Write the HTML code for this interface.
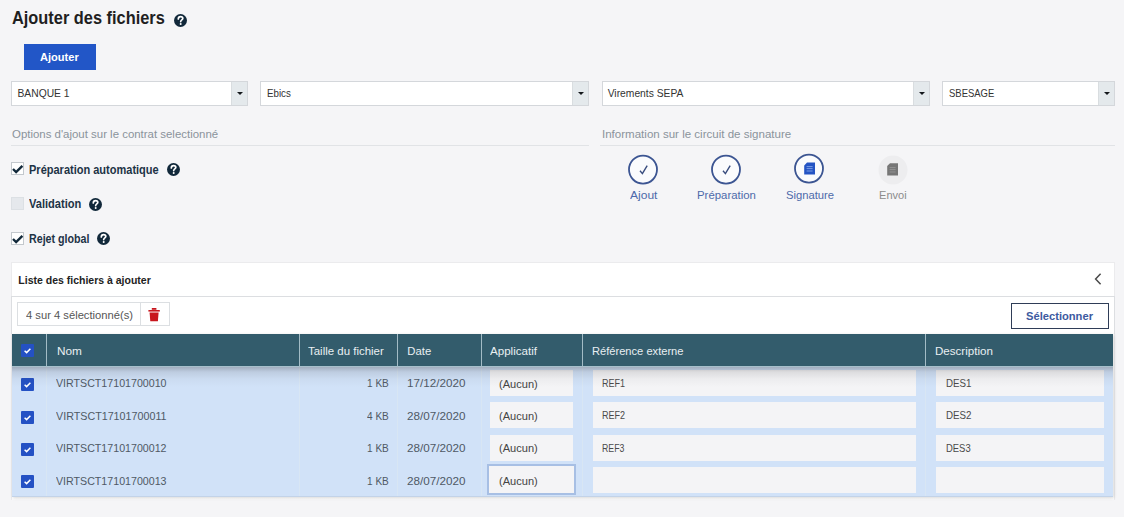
<!DOCTYPE html>
<html><head><meta charset="utf-8">
<style>
*{box-sizing:border-box;margin:0;padding:0}
html,body{width:1124px;height:517px;overflow:hidden;background:#f5f5f7;font-family:"Liberation Sans",sans-serif;position:relative}
.t{position:absolute;white-space:nowrap;line-height:1;transform-origin:0 0}
.a{position:absolute}
.dd{position:absolute;top:81px;height:25px;background:#fff;border:1px solid #d4d7db}
.dd .ar{position:absolute;right:0;top:0;width:16.5px;height:23px;background:#e4e9ec;border-left:1px solid #d9dde0}
.dd .ar:after{content:"";position:absolute;left:5.2px;top:10.4px;border-left:3px solid transparent;border-right:3px solid transparent;border-top:3.6px solid #14181c}
.line{position:absolute;height:1px;background:#e1e3e6}
.cb{position:absolute;width:12.5px;height:12.5px;border:1px solid #c3c8cd;background:#fff}
.cb.off{background:#e5e8ec;border-color:#dce0e4}
.ck{position:absolute;background:#2451c4;border-radius:1px}

</style></head><body>
<!-- title help -->
<svg class="a" style="left:174px;top:14.2px" width="13" height="13" viewBox="0 0 13 13"><circle cx="6.5" cy="6.5" r="6.5" fill="#11283a"/><path d="M4.3 5.0 C4.3 3.4 5.3 2.6 6.6 2.6 C7.9 2.6 8.8 3.4 8.8 4.5 C8.8 5.9 6.7 6.0 6.7 7.6" fill="none" stroke="#fff" stroke-width="1.7" stroke-linecap="round"/><circle cx="6.7" cy="9.9" r="1" fill="#fff"/></svg>
<div class="a" style="left:23.8px;top:44px;width:72.2px;height:25.8px;background:#2256c7"></div>

<div class="dd" style="left:11px;width:237px"><div class="ar"></div></div>
<div class="dd" style="left:260px;width:329px"><div class="ar"></div></div>
<div class="dd" style="left:601.5px;width:328.5px"><div class="ar"></div></div>
<div class="dd" style="left:942px;width:173px"><div class="ar"></div></div>

<div class="line" style="left:11px;top:145px;width:578px"></div>
<div class="line" style="left:600px;top:145px;width:515px"></div>

<div class="cb" style="left:11.2px;top:162.4px"></div>
<svg class="a" style="left:11px;top:162px" width="14" height="14" viewBox="0 0 14 14"><path d="M2 7.0 L5.1 10.0 L11.4 3.8" fill="none" stroke="#11283a" stroke-width="2.4"/></svg>
<div class="cb off" style="left:11.2px;top:197.3px"></div>
<div class="cb" style="left:11.2px;top:232px"></div>
<svg class="a" style="left:11px;top:231.6px" width="14" height="14" viewBox="0 0 14 14"><path d="M2 7.0 L5.1 10.0 L11.4 3.8" fill="none" stroke="#11283a" stroke-width="2.4"/></svg>

<svg class="a" style="left:166.6px;top:162.6px" width="13" height="13" viewBox="0 0 13 13"><circle cx="6.5" cy="6.5" r="6.5" fill="#11283a"/><path d="M4.3 5.0 C4.3 3.4 5.3 2.6 6.6 2.6 C7.9 2.6 8.8 3.4 8.8 4.5 C8.8 5.9 6.7 6.0 6.7 7.6" fill="none" stroke="#fff" stroke-width="1.7" stroke-linecap="round"/><circle cx="6.7" cy="9.9" r="1" fill="#fff"/></svg>
<svg class="a" style="left:88.8px;top:197.7px" width="13" height="13" viewBox="0 0 13 13"><circle cx="6.5" cy="6.5" r="6.5" fill="#11283a"/><path d="M4.3 5.0 C4.3 3.4 5.3 2.6 6.6 2.6 C7.9 2.6 8.8 3.4 8.8 4.5 C8.8 5.9 6.7 6.0 6.7 7.6" fill="none" stroke="#fff" stroke-width="1.7" stroke-linecap="round"/><circle cx="6.7" cy="9.9" r="1" fill="#fff"/></svg>
<svg class="a" style="left:96.7px;top:232.2px" width="13" height="13" viewBox="0 0 13 13"><circle cx="6.5" cy="6.5" r="6.5" fill="#11283a"/><path d="M4.3 5.0 C4.3 3.4 5.3 2.6 6.6 2.6 C7.9 2.6 8.8 3.4 8.8 4.5 C8.8 5.9 6.7 6.0 6.7 7.6" fill="none" stroke="#fff" stroke-width="1.7" stroke-linecap="round"/><circle cx="6.7" cy="9.9" r="1" fill="#fff"/></svg>

<!-- circuit -->
<svg class="a" style="left:626px;top:153px" width="34" height="34" viewBox="0 0 34 34"><circle cx="17" cy="16.6" r="14" fill="#fafbfd" stroke="#3c5592" stroke-width="1.8"/><path d="M14 17.8 L16.4 20.6 L21.2 12.6" fill="none" stroke="#384c7e" stroke-width="1.4"/></svg>
<svg class="a" style="left:709px;top:153px" width="34" height="34" viewBox="0 0 34 34"><circle cx="17" cy="16.6" r="14" fill="#fafbfd" stroke="#3c5592" stroke-width="1.8"/><path d="M14 17.8 L16.4 20.6 L21.2 12.6" fill="none" stroke="#384c7e" stroke-width="1.4"/></svg>
<svg class="a" style="left:792px;top:152.2px" width="34" height="34" viewBox="0 0 34 34"><circle cx="17" cy="16.6" r="14" fill="#fafbfd" stroke="#3c5592" stroke-width="1.8"/><path d="M15 10.6 H23 V22.4 H12.2 V13.4 Z" fill="#2454c4"/><path d="M14.6 14.6 H20.6 M14.6 16.6 H20.6 M14.6 19 H20.6" stroke="#8fb0ee" stroke-width="0.8"/></svg>
<svg class="a" style="left:876px;top:152.5px" width="34" height="34" viewBox="0 0 34 34"><circle cx="17" cy="17" r="14.5" fill="#ededef"/><path d="M14 10.3 H22 V22.5 H11.2 V13.1 Z" fill="#767676"/><path d="M13.6 14.6 H19.6 M13.6 16.6 H19.6 M13.6 19 H19.6" stroke="#9a9a9a" stroke-width="0.8"/></svg>

<!-- panel -->
<div class="a" style="left:10.5px;top:262px;width:1104.5px;height:238px;background:linear-gradient(#fff 0,#fff 235px,#f5f5f7 238px);border:1px solid #ebebed;border-bottom:none"></div>
<div class="a" style="left:11px;top:296px;width:1104px;height:38px;border:1px solid #dcdee1;border-bottom:none"></div>
<svg class="a" style="left:1093px;top:272px" width="10" height="14" viewBox="0 0 10 14"><path d="M7.6 1.8 L2.6 7 L7.6 12.2" fill="none" stroke="#4a4a4a" stroke-width="1.5"/></svg>
<div class="a" style="left:16.5px;top:301.7px;width:153px;height:24.6px;border:1px solid #dcdfe2;background:#fff"></div>
<div class="a" style="left:140px;top:302px;width:1px;height:24px;background:#dcdfe2"></div>
<svg class="a" style="left:147px;top:307px" width="14" height="16" viewBox="0 0 14 16"><path d="M4.8 1 H9.4 V2.8 H4.8 Z" fill="#c8161d"/><path d="M1.4 3 H12.8 V4.6 H1.4 Z" fill="#c8161d"/><path d="M2.6 5.4 H11.6 L10.9 14.2 H3.3 Z" fill="#c8161d"/></svg>
<div class="a" style="left:1011px;top:303px;width:98px;height:25.5px;border:1px solid #2f3d57;background:#fff"></div>
<div class="a" style="left:12px;top:334px;width:1101px;height:162.6px;box-shadow:1px 1px 3px rgba(0,0,0,0.16)"></div>
<div class="a" style="left:12px;top:334px;width:1101px;height:32px;background:#335c6c"></div>
<div class="a" style="left:12px;top:366px;width:1101px;height:130.6px;background:#d1e2f8;border-bottom:1px solid #c3d3e8"></div>

<div class="a" style="left:46px;top:334px;width:1px;height:32px;background:#a3bcc6"></div>
<div class="a" style="left:46px;top:366px;width:1px;height:130.4px;background:#d8e6f4"></div>
<div class="a" style="left:298.5px;top:334px;width:1px;height:32px;background:#a3bcc6"></div>
<div class="a" style="left:298.5px;top:366px;width:1px;height:130.4px;background:#d8e6f4"></div>
<div class="a" style="left:397.3px;top:334px;width:1px;height:32px;background:#a3bcc6"></div>
<div class="a" style="left:397.3px;top:366px;width:1px;height:130.4px;background:#d8e6f4"></div>
<div class="a" style="left:480.7px;top:334px;width:1px;height:32px;background:#a3bcc6"></div>
<div class="a" style="left:480.7px;top:366px;width:1px;height:130.4px;background:#d8e6f4"></div>
<div class="a" style="left:582.3px;top:334px;width:1px;height:32px;background:#a3bcc6"></div>
<div class="a" style="left:582.3px;top:366px;width:1px;height:130.4px;background:#d8e6f4"></div>
<div class="a" style="left:925.4px;top:334px;width:1px;height:32px;background:#a3bcc6"></div>
<div class="a" style="left:925.4px;top:366px;width:1px;height:130.4px;background:#d8e6f4"></div>
<svg class="a" style="left:20.8px;top:344px" width="13" height="13" viewBox="0 0 13 13"><rect width="13" height="13" rx="1" fill="#2451c4"/><path d="M3.6 6.7 L5.6 8.6 L9.4 4.7" fill="none" stroke="#fff" stroke-width="1.5"/></svg>
<svg class="a" style="left:20.8px;top:378.1px" width="13" height="13" viewBox="0 0 13 13"><rect width="13" height="13" rx="1" fill="#2451c4"/><path d="M3.6 6.7 L5.6 8.6 L9.4 4.7" fill="none" stroke="#fff" stroke-width="1.5"/></svg>
<div class="a" style="left:489.8px;top:369.70px;width:83px;height:26.3px;background:#f4f4f6"></div>
<div class="a" style="left:592.6px;top:369.70px;width:323.4px;height:26.3px;background:#f4f4f6"></div>
<div class="a" style="left:936.2px;top:369.70px;width:167.8px;height:26.3px;background:#f4f4f6"></div>
<svg class="a" style="left:20.8px;top:410.5px" width="13" height="13" viewBox="0 0 13 13"><rect width="13" height="13" rx="1" fill="#2451c4"/><path d="M3.6 6.7 L5.6 8.6 L9.4 4.7" fill="none" stroke="#fff" stroke-width="1.5"/></svg>
<div class="a" style="left:489.8px;top:402.10px;width:83px;height:26.3px;background:#f4f4f6"></div>
<div class="a" style="left:592.6px;top:402.10px;width:323.4px;height:26.3px;background:#f4f4f6"></div>
<div class="a" style="left:936.2px;top:402.10px;width:167.8px;height:26.3px;background:#f4f4f6"></div>
<svg class="a" style="left:20.8px;top:442.9px" width="13" height="13" viewBox="0 0 13 13"><rect width="13" height="13" rx="1" fill="#2451c4"/><path d="M3.6 6.7 L5.6 8.6 L9.4 4.7" fill="none" stroke="#fff" stroke-width="1.5"/></svg>
<div class="a" style="left:489.8px;top:434.50px;width:83px;height:26.3px;background:#f4f4f6"></div>
<div class="a" style="left:592.6px;top:434.50px;width:323.4px;height:26.3px;background:#f4f4f6"></div>
<div class="a" style="left:936.2px;top:434.50px;width:167.8px;height:26.3px;background:#f4f4f6"></div>
<svg class="a" style="left:20.8px;top:475.3px" width="13" height="13" viewBox="0 0 13 13"><rect width="13" height="13" rx="1" fill="#2451c4"/><path d="M3.6 6.7 L5.6 8.6 L9.4 4.7" fill="none" stroke="#fff" stroke-width="1.5"/></svg>
<div class="a" style="left:487.2px;top:464.30px;width:88.4px;height:31.1px;border:2.5px solid #a7bfe4;background:#f4f4f6"></div>
<div class="a" style="left:592.6px;top:466.90px;width:323.4px;height:26.3px;background:#f4f4f6"></div>
<div class="a" style="left:936.2px;top:466.90px;width:167.8px;height:26.3px;background:#f4f4f6"></div>
<div class="a" style="left:12px;top:367px;width:1101px;height:20px;background:linear-gradient(rgba(50,50,55,0.30),rgba(50,50,55,0.12) 25%,rgba(50,50,55,0.04) 60%,rgba(50,50,55,0))"></div>
<div class="a" style="left:12px;top:366px;width:1101px;height:1.2px;background:#a6bfcb"></div>
<div class="t" style="left:11.60px;top:9.88px;font-size:17.5px;font-weight:bold;color:#1f1f1f;transform:scaleX(0.9349)">Ajouter des fichiers</div>
<div class="t" style="left:39.90px;top:51.76px;font-size:10.8px;font-weight:bold;color:#ffffff;transform:scaleX(1.0237)">Ajouter</div>
<div class="t" style="left:17.50px;top:88.58px;font-size:10.3px;font-weight:normal;color:#333333">BANQUE 1</div>
<div class="t" style="left:267.30px;top:88.58px;font-size:10.3px;font-weight:normal;color:#333333;transform:scaleX(0.9468)">Ebics</div>
<div class="t" style="left:607.70px;top:88.58px;font-size:10.3px;font-weight:normal;color:#333333">Virements SEPA</div>
<div class="t" style="left:948.50px;top:88.58px;font-size:10.3px;font-weight:normal;color:#333333;transform:scaleX(0.9200)">SBESAGE</div>
<div class="t" style="left:12.00px;top:128.69px;font-size:11px;font-weight:normal;color:#8a939b;transform:scaleX(1.0390)">Options d'ajout sur le contrat selectionné</div>
<div class="t" style="left:601.95px;top:128.69px;font-size:11px;font-weight:normal;color:#8a939b;transform:scaleX(1.0489)">Information sur le circuit de signature</div>
<div class="t" style="left:29.20px;top:163.84px;font-size:12px;font-weight:bold;color:#1d3346;transform:scaleX(0.9175)">Préparation automatique</div>
<div class="t" style="left:29.20px;top:198.24px;font-size:12px;font-weight:bold;color:#1d3346;transform:scaleX(0.9228)">Validation</div>
<div class="t" style="left:29.20px;top:232.84px;font-size:12px;font-weight:bold;color:#1d3346;transform:scaleX(0.8895)">Rejet global</div>
<div class="t" style="left:629.50px;top:189.82px;font-size:10.6px;font-weight:normal;color:#4d6aaa;transform:scaleX(1.1362)">Ajout</div>
<div class="t" style="left:697.00px;top:189.82px;font-size:10.6px;font-weight:normal;color:#4d6aaa;transform:scaleX(1.0751)">Préparation</div>
<div class="t" style="left:785.70px;top:189.82px;font-size:10.6px;font-weight:normal;color:#4d6aaa;transform:scaleX(1.0603)">Signature</div>
<div class="t" style="left:879.00px;top:189.82px;font-size:10.6px;font-weight:normal;color:#8c8c8c;transform:scaleX(1.0441)">Envoi</div>
<div class="t" style="left:18.30px;top:274.91px;font-size:10.5px;font-weight:bold;color:#222222">Liste des fichiers à ajouter</div>
<div class="t" style="left:25.80px;top:309.81px;font-size:10.5px;font-weight:normal;color:#555555;transform:scaleX(1.0662)">4 sur 4 sélectionné(s)</div>
<div class="t" style="left:1026.30px;top:310.76px;font-size:11.5px;font-weight:bold;color:#3d5a9f;transform:scaleX(0.9706)">Sélectionner</div>
<div class="t" style="left:56.60px;top:345.63px;font-size:11.3px;font-weight:normal;color:#e9eff2;transform:scaleX(1.0452)">Nom</div>
<div class="t" style="left:307.90px;top:345.63px;font-size:11.3px;font-weight:normal;color:#e9eff2;transform:scaleX(1.0139)">Taille du fichier</div>
<div class="t" style="left:407.30px;top:345.63px;font-size:11.3px;font-weight:normal;color:#e9eff2">Date</div>
<div class="t" style="left:489.80px;top:345.63px;font-size:11.3px;font-weight:normal;color:#e9eff2;transform:scaleX(1.0257)">Applicatif</div>
<div class="t" style="left:592.20px;top:345.63px;font-size:11.3px;font-weight:normal;color:#e9eff2;transform:scaleX(0.9843)">Référence externe</div>
<div class="t" style="left:935.40px;top:345.63px;font-size:11.3px;font-weight:normal;color:#e9eff2;transform:scaleX(1.0245)">Description</div>
<div class="t" style="left:56.10px;top:378.42px;font-size:11.2px;font-weight:normal;color:#4f5965;transform:scaleX(0.9519)">VIRTSCT17101700010</div>
<div class="t" style="left:366.80px;top:378.42px;font-size:11.2px;font-weight:normal;color:#4f5965;transform:scaleX(0.8995)">1 KB</div>
<div class="t" style="left:407.30px;top:378.42px;font-size:11.2px;font-weight:normal;color:#4f5965;transform:scaleX(1.0454)">17/12/2020</div>
<div class="t" style="left:499.20px;top:378.62px;font-size:11.2px;font-weight:normal;color:#444444;transform:scaleX(0.9887)">(Aucun)</div>
<div class="t" style="left:602.20px;top:377.91px;font-size:11.8px;font-weight:normal;color:#4a4a4a;transform:scaleX(0.7671)">REF1</div>
<div class="t" style="left:945.80px;top:377.91px;font-size:11.8px;font-weight:normal;color:#4a4a4a;transform:scaleX(0.8263)">DES1</div>
<div class="t" style="left:56.10px;top:410.82px;font-size:11.2px;font-weight:normal;color:#4f5965;transform:scaleX(0.9588)">VIRTSCT17101700011</div>
<div class="t" style="left:366.80px;top:410.82px;font-size:11.2px;font-weight:normal;color:#4f5965;transform:scaleX(0.8995)">4 KB</div>
<div class="t" style="left:407.30px;top:410.82px;font-size:11.2px;font-weight:normal;color:#4f5965;transform:scaleX(1.0454)">28/07/2020</div>
<div class="t" style="left:499.20px;top:411.02px;font-size:11.2px;font-weight:normal;color:#444444;transform:scaleX(0.9887)">(Aucun)</div>
<div class="t" style="left:602.20px;top:410.31px;font-size:11.8px;font-weight:normal;color:#4a4a4a;transform:scaleX(0.7671)">REF2</div>
<div class="t" style="left:945.80px;top:410.31px;font-size:11.8px;font-weight:normal;color:#4a4a4a;transform:scaleX(0.8263)">DES2</div>
<div class="t" style="left:56.10px;top:443.22px;font-size:11.2px;font-weight:normal;color:#4f5965;transform:scaleX(0.9519)">VIRTSCT17101700012</div>
<div class="t" style="left:366.80px;top:443.22px;font-size:11.2px;font-weight:normal;color:#4f5965;transform:scaleX(0.8995)">1 KB</div>
<div class="t" style="left:407.30px;top:443.22px;font-size:11.2px;font-weight:normal;color:#4f5965;transform:scaleX(1.0454)">28/07/2020</div>
<div class="t" style="left:499.20px;top:443.42px;font-size:11.2px;font-weight:normal;color:#444444;transform:scaleX(0.9887)">(Aucun)</div>
<div class="t" style="left:602.20px;top:442.71px;font-size:11.8px;font-weight:normal;color:#4a4a4a;transform:scaleX(0.7420)">REF3</div>
<div class="t" style="left:945.80px;top:442.71px;font-size:11.8px;font-weight:normal;color:#4a4a4a;transform:scaleX(0.7998)">DES3</div>
<div class="t" style="left:56.10px;top:475.62px;font-size:11.2px;font-weight:normal;color:#4f5965;transform:scaleX(0.9519)">VIRTSCT17101700013</div>
<div class="t" style="left:366.80px;top:475.62px;font-size:11.2px;font-weight:normal;color:#4f5965;transform:scaleX(0.8995)">1 KB</div>
<div class="t" style="left:407.30px;top:475.62px;font-size:11.2px;font-weight:normal;color:#4f5965;transform:scaleX(1.0454)">28/07/2020</div>
<div class="t" style="left:499.20px;top:475.82px;font-size:11.2px;font-weight:normal;color:#444444;transform:scaleX(0.9887)">(Aucun)</div>
</body></html>
